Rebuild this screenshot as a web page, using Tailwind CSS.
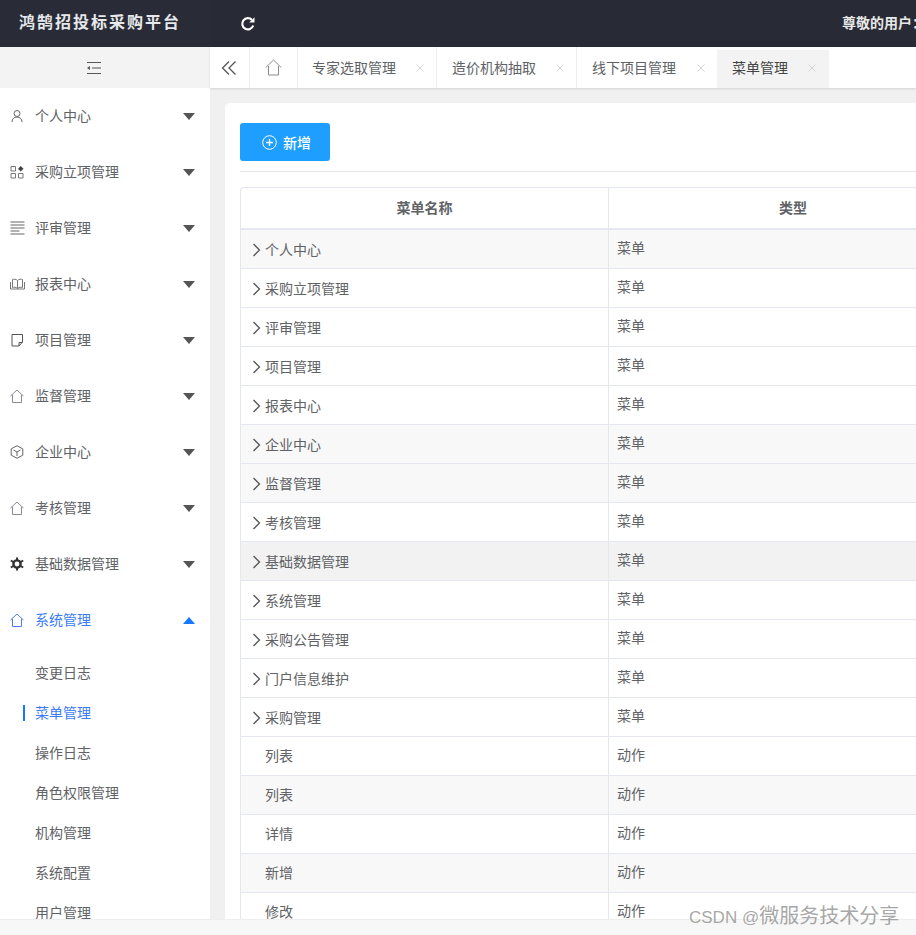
<!DOCTYPE html>
<html lang="zh-CN">
<head>
    <meta charset="UTF-8">
    <meta name="viewport" content="width=device-width, initial-scale=1.0">
    <title>鸿鹄招投标采购平台 - 菜单管理</title>
    <script src="https://cdn.jsdelivr.net/npm/@tailwindcss/browser@4"></script>
</head>
<body class="relative h-[935px] w-[916px] overflow-hidden bg-[#f0f0f0] font-['Liberation_Sans','Noto_Sans_CJK_SC',sans-serif] text-sm text-[#606266]">
    <div class="flex h-[919px] flex-col">
        <!-- 顶部 -->
        <header class="flex h-[47px] shrink-0 items-center overflow-hidden bg-[#282b35] text-white">
            <div class="flex h-full w-[211px] shrink-0 items-center bg-[#292c37] pb-[2px] pl-[19px] text-base font-bold tracking-[2px] text-[#e6e8ec]">鸿鹄招投标采购平台</div>
            <svg class="ml-[29px] h-4 w-4 shrink-0" viewBox="0 0 16 16" fill="none" stroke="#fff" stroke-width="2.2"><path d="M13.2 9.5A5.6 5.6 0 1 1 12 4"/><path d="M14.5 1.2v5.3H9.2z" fill="#fff" stroke="none"/></svg>
            <span class="ml-[586px] shrink-0 whitespace-nowrap pb-[2px] font-bold text-[#e8e8e8]">尊敬的用户：</span>
        </header>

        <div class="flex min-h-0 flex-1">
            <!-- 侧边栏 -->
            <aside class="w-[210px] shrink-0 overflow-hidden bg-white">
                <div class="flex h-[41px] items-center justify-center bg-[#f3f3f3] pr-[22px]">
                    <svg class="h-[14px] w-[14px]" viewBox="0 0 14 14" fill="none" stroke="#555"><path d="M0 1.500h14M5 7h9M0 12.500h14"/><path d="M3 5v4L0 7z" fill="#555" stroke="none"/></svg>
                </div>
                <nav id="sideMenu"></nav>
            </aside>

            <div class="flex min-w-0 flex-1 flex-col">
                <!-- 标签栏 -->
                <div id="tabBar" class="flex h-[41px] shrink-0 items-stretch bg-white shadow-[0_1px_2px_rgba(0,0,0,0.12)]">
                    <div class="flex w-[40px] items-center justify-center border-r border-[#eeeeee] pr-[2px]">
                        <svg class="h-[14px] w-[16px]" viewBox="0 0 16 14" fill="none" stroke="#555" stroke-width="1.3"><path d="M8 .5 1.500 7 8 13.500M14.500 .5 8 7l6.500 6.500"/></svg>
                    </div>
                    <div class="flex w-[48px] items-center justify-center border-r border-[#eeeeee]">
                        <svg class="h-[17px] w-[17px]" viewBox="0 0 17 17" fill="none" stroke="#8a8a8a"><path d="M.8 8.500 8.500 1l7.700 7.500M3.500 7v9h10V7"/></svg>
                    </div>
                    <div class="flex w-[139px] items-center justify-between border-r border-[#eeeeee] pl-[14px] pr-[12px]"><span>专家选取管理</span><svg class="h-2 w-2" viewBox="0 0 8 8" stroke="#d4d4d4"><path d="M.5 .5l7 7M7.500 .5l-7 7"/></svg></div>
                    <div class="flex w-[140px] items-center justify-between border-r border-[#eeeeee] pl-[15px] pr-[12px]"><span>造价机构抽取</span><svg class="h-2 w-2" viewBox="0 0 8 8" stroke="#d4d4d4"><path d="M.5 .5l7 7M7.500 .5l-7 7"/></svg></div>
                    <div class="flex w-[140px] items-center justify-between pl-[15px] pr-[12px]"><span>线下项目管理</span><svg class="h-2 w-2" viewBox="0 0 8 8" stroke="#d4d4d4"><path d="M.5 .5l7 7M7.500 .5l-7 7"/></svg></div>
                    <div class="mt-[3px] flex w-[112px] items-center justify-between bg-[#f3f3f3] pb-[3px] pl-[15px] pr-[13px] text-[#444444]"><span>菜单管理</span><svg class="h-2 w-2" viewBox="0 0 8 8" stroke="#d4d4d4"><path d="M.5 .5l7 7M7.500 .5l-7 7"/></svg></div>
                </div>

                <!-- 内容 -->
                <main class="min-h-0 flex-1 overflow-hidden pl-[15px] pt-[15px]">
                    <div class="h-[900px] w-[900px] rounded-tl-[5px] bg-white pl-[15px] pt-[20px]">
                        <button class="flex h-[38px] w-[90px] items-center gap-[6px] rounded-[3px] bg-[#1e9fff] pl-[22px] text-white">
                            <svg class="h-[15px] w-[15px]" viewBox="0 0 15 15" fill="none" stroke="#fff"><circle cx="7.500" cy="7.500" r="6.800"/><path d="M7.500 4v7M4 7.500h7" stroke-width="1.300"/></svg>
                            <span class="pt-[1px] font-medium">新增</span>
                        </button>
                        <div class="mt-[10px] h-[1px] w-full bg-[#e6e6e6]"></div>
                        <table class="mt-[15px] w-[737px] table-fixed border-separate border-spacing-0 rounded-tl-[4px] border-l border-t border-[#e4e7ed]">
                            <colgroup><col class="w-[368px]"><col></colgroup>
                            <thead>
                                <tr class="h-[42px] font-bold">
                                    <th class="border-b-2 border-r border-[#e4e7ed] font-bold">菜单名称</th>
                                    <th class="border-b-2 border-[#e4e7ed] font-bold">类型</th>
                                </tr>
                            </thead>
                            <tbody id="menuRows"></tbody>
                        </table>
                    </div>
                </main>
            </div>
        </div>
    </div>

    <footer class="h-4 border-t border-[#eeeeee] bg-[#f7f7f7]"></footer>
    <div class="absolute left-[689px] top-[904px] whitespace-nowrap text-[20px] leading-6 text-[#8f8f8f]/80"><span class="text-[17px]">CSDN @</span>微服务技术分享</div>

    <script>
        const arrowDown = '<svg class="h-[7px] w-3" viewBox="0 0 12 7"><path d="M0 0h12L6 7z" fill="#555"/></svg>';
        const arrowUp = '<svg class="h-[7px] w-3" viewBox="0 0 12 7"><path d="M0 7h12L6 0z" fill="#1677ff"/></svg>';
        const home = c => `<svg class="h-[14px] w-[14px]" viewBox="0 0 14 14" fill="none" stroke="${c}"><path d="M.5 7 7 1l6.500 6M2.500 6v7.500h9V6"/></svg>`;

        const icons = {
            user: '<svg class="h-[14px] w-[14px]" viewBox="0 0 14 14" fill="none" stroke="#666"><circle cx="7" cy="4.500" r="3"/><path d="M2 13c0-3 2-5 5-5s5 2 5 5"/></svg>',
            apps: '<svg class="h-[14px] w-[14px]" viewBox="0 0 14 14" fill="none" stroke="#777"><path d="M1 1.500h4.500V6H1zM1 8.500h4.500V13H1zM8.500 8.500H13V13H8.500z"/><path d="M10.700 1 13.500 3.800 10.700 6.600 8 3.800z" fill="#444" stroke="none"/></svg>',
            lines: '<svg class="h-[14px] w-[15px]" viewBox="0 0 15 14" fill="none" stroke="#666"><path d="M.5 1h14M.5 4h14M.5 7h14M.5 10h9M.5 13h14"/></svg>',
            book: '<svg class="h-[14px] w-[15px]" viewBox="0 0 15 14" fill="none" stroke="#777"><path d="M7.500 3.500C6 2 4 2 2.500 2.500v8C4 10 6 10 7.500 11.500 9 10 11 10 12.500 10.500v-8C11 2 9 2 7.500 3.500zM7.500 3.500v8M.5 5v7h14V5"/></svg>',
            note: '<svg class="h-[14px] w-[14px]" viewBox="0 0 14 14" fill="none" stroke="#555"><path d="M2 1.500h10.500V9L9 13H2zM12.500 9.500H9V13"/></svg>',
            box: '<svg class="h-[14px] w-[14px]" viewBox="0 0 14 14" fill="none" stroke="#666"><path d="M7 .800 12.800 3.800v6.400L7 13.200 1.200 10.200V3.800zM3.500 5 7 7l3.500-2M7 7v4"/></svg>',
            gear: '<svg class="h-[14px] w-[14px]" viewBox="0 0 14 14" fill="none" stroke="#333"><circle cx="7" cy="7" r="3.600" stroke-width="2.400"/><path d="M7 .500v3M7 10.500v3M.800 3.500l2.600 1.500M10.600 9l2.600 1.500M.800 10.500 3.400 9M10.600 5l2.600-1.500" stroke-width="2"/></svg>',
            home: home('#8a8a96'),
            homeActive: home('#4c7cf3')
        };

        const menus = [
            ['个人中心', icons.user], ['采购立项管理', icons.apps], ['评审管理', icons.lines], ['报表中心', icons.book],
            ['项目管理', icons.note], ['监督管理', icons.home], ['企业中心', icons.box], ['考核管理', icons.home], ['基础数据管理', icons.gear]
        ];
        const subMenus = ['变更日志', '菜单管理', '操作日志', '角色权限管理', '机构管理', '系统配置', '用户管理'];

        let side = menus.map(([name, icon]) => `
            <div class="flex h-14 items-center pl-[10px] pr-[15px]">
                <span class="flex w-[25px] items-center">${icon}</span><span>${name}</span><span class="ml-auto">${arrowDown}</span>
            </div>`).join('');
        side += `
            <div class="flex h-14 items-center pl-[10px] pr-[15px] text-[#3b7cf5]">
                <span class="flex w-[25px] items-center">${icons.homeActive}</span><span>系统管理</span><span class="ml-auto">${arrowUp}</span>
            </div>
            <div class="pt-[5px]">` + subMenus.map(name => name === '菜单管理'
                ? `<div class="relative flex h-10 items-center pl-[35px] text-[#3b7cf5]"><span class="absolute left-[23px] top-[12px] h-4 w-[2px] bg-[#1677ff]"></span>${name}</div>`
                : `<div class="flex h-10 items-center pl-[35px]">${name}</div>`).join('') + '</div>';
        document.getElementById('sideMenu').innerHTML = side;

        // 名称, 类型, 是否有子级, 背景
        const rows = [
            ['个人中心', '菜单', 1, 1], ['采购立项管理', '菜单', 1, 0], ['评审管理', '菜单', 1, 0], ['项目管理', '菜单', 1, 0],
            ['报表中心', '菜单', 1, 0], ['企业中心', '菜单', 1, 1], ['监督管理', '菜单', 1, 1], ['考核管理', '菜单', 1, 0],
            ['基础数据管理', '菜单', 1, 2], ['系统管理', '菜单', 1, 0], ['采购公告管理', '菜单', 1, 0], ['门户信息维护', '菜单', 1, 0],
            ['采购管理', '菜单', 1, 0], ['列表', '动作', 0, 0], ['列表', '动作', 0, 1], ['详情', '动作', 0, 0], ['新增', '动作', 0, 1], ['修改', '动作', 0, 0]
        ];
        const chevron = '<svg class="mr-[4px] h-[14px] w-[9px]" viewBox="0 0 9 14" fill="none" stroke="#555" stroke-width="1.300"><path d="M1.500 1 7.500 7l-6 6"/></svg>';
        const stripe = ['bg-white', 'bg-[#f8f8f8]', 'bg-[#f2f2f2]'];
        document.getElementById('menuRows').innerHTML = rows.map(([name, type, hasChild, bg]) => `
            <tr class="h-[39px] ${stripe[bg]}">
                <td class="border-b border-r border-[#e4e7ed] p-0">
                    <div class="flex items-center pl-[11px] ${hasChild ? 'pt-[1px]' : ''}">${hasChild ? chevron : '<span class="w-[13px]"></span>'}<span>${name}</span></div>
                </td>
                <td class="border-b border-[#e4e7ed] p-0 pl-2"><span class="relative -top-[1px]">${type}</span></td>
            </tr>`).join('');
    </script>
</body>
</html>
